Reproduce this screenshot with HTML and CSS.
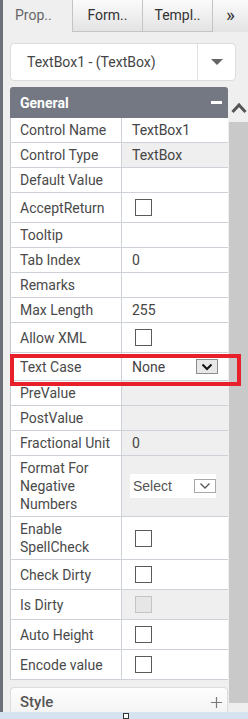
FILE: index.html
```html
<!DOCTYPE html>
<html>
  <head>
    <title>Properties</title>
    <link rel="stylesheet" href="styles.css">
  </head>
  <body>
    <div class="frame">
      <div class="edge"></div>
      <div class="pane">
        <div class="tabs">
          <div class="tab active">Prop..</div>
          <div class="tab">Form..</div>
          <div class="tab">Templ..</div>
          <div class="tab more">&raquo;</div>
        </div>

        <div class="picker">
          <div class="picker-text">TextBox1 - (TextBox)</div>
          <div class="picker-btn"><span class="caret"></span></div>
        </div>

        <div class="body-row">
          <div class="panels">
            <div class="panel">
              <div class="panel-head">
                <span>General</span>
                <span class="minus"></span>
              </div>
              <table class="grid">
                <tr><td>Control Name</td><td>TextBox1</td></tr>
                <tr><td>Control Type</td><td class="ro">TextBox</td></tr>
                <tr><td>Default Value</td><td></td></tr>
                <tr class="chk"><td>AcceptReturn</td><td><span class="box"></span></td></tr>
                <tr><td>Tooltip</td><td></td></tr>
                <tr><td>Tab Index</td><td>0</td></tr>
                <tr><td>Remarks</td><td></td></tr>
                <tr><td>Max Length</td><td>255</td></tr>
                <tr class="chk"><td>Allow XML</td><td><span class="box"></span></td></tr>
                <tr class="case">
                  <td class="mark-cell">Text Case<div class="mark"></div></td>
                  <td>
                    <div class="sel">
                      <span>None</span>
                      <span class="sel-btn dark">
                        <svg width="12" height="8" viewBox="0 0 12 8"><path d="M1.5 1.5 L6 6 L10.5 1.5" fill="none" stroke="#111" stroke-width="2"/></svg>
                      </span>
                    </div>
                  </td>
                </tr>
                <tr><td>PreValue</td><td class="ro"></td></tr>
                <tr><td>PostValue</td><td class="ro"></td></tr>
                <tr><td>Fractional Unit</td><td class="ro">0</td></tr>
                <tr class="multi">
                  <td>Format For<br>Negative<br>Numbers</td>
                  <td class="ro">
                    <div class="select-box">
                      <span>Select</span>
                      <span class="sel-btn light">
                        <svg width="12" height="8" viewBox="0 0 12 8"><path d="M1.5 1.5 L6 6 L10.5 1.5" fill="none" stroke="#555" stroke-width="1.3"/></svg>
                      </span>
                    </div>
                  </td>
                </tr>
                <tr class="multi"><td>Enable<br>SpellCheck</td><td><span class="box"></span></td></tr>
                <tr class="chk"><td>Check Dirty</td><td><span class="box"></span></td></tr>
                <tr class="chk"><td>Is Dirty</td><td class="ro"><span class="box off"></span></td></tr>
                <tr class="chk"><td>Auto Height</td><td><span class="box"></span></td></tr>
                <tr class="chk last"><td>Encode value</td><td><span class="box"></span></td></tr>
              </table>
            </div>

            <div class="panel-closed">
              <span>Style</span>
              <svg class="plus" width="11" height="11" viewBox="0 0 11 11"><path d="M5.5 0 V11 M0 5.5 H11" stroke="#7a7a7a" stroke-width="1.2"/></svg>
            </div>
          </div>

          <div class="scroll">
            <div class="scroll-up">
              <svg width="16" height="12" viewBox="0 0 16 12"><path d="M1.5 10 L8 3 L14.5 10" fill="none" stroke="#555" stroke-width="3"/></svg>
            </div>
            <div class="thumb"></div>
          </div>
        </div>
      </div>
    </div>
    <div class="status"><span class="grip"></span></div>
  </body>
</html>
```

FILE: styles.css
```css
html, body {
  height: 100%;
}

body {
  margin: 0;
  font-family: Roboto, "Liberation Sans", sans-serif;
  font-size: 14px;
  color: #4a4a4a;
  background-color: #efefef;
  display: flex;
  flex-direction: column;
  overflow: hidden;
}

.frame {
  flex: 1;
  display: flex;
  min-height: 0;
}

.edge {
  width: 3px;
  background-color: #6b7079;
}

.pane {
  flex: 1;
  display: flex;
  flex-direction: column;
  min-width: 0;
}

/* tabs */
.tabs {
  display: flex;
  height: 32px;
}

.tab {
  width: 70px;
  box-sizing: border-box;
  display: flex;
  align-items: center;
  justify-content: center;
  color: #333;
  background: linear-gradient(#fbfbfb, #e3e3e3);
  border-left: 1px solid #c4c4c4;
  border-bottom: 1px solid #c4c4c4;
  padding-bottom: 2px;
}

.tab.active {
  width: 69px;
  background: #efefef;
  color: #666;
  border: none;
  justify-content: flex-start;
  padding-left: 12px;
}

.tab.more {
  flex: 1;
  border-bottom: none;
  font-size: 19px;
  padding-bottom: 4px;
}

/* component picker */
.picker {
  margin: 11px 12px 0 7px;
  height: 38px;
  box-sizing: border-box;
  display: flex;
  background-color: #fff;
  border: 1px solid #dcdcdc;
  border-radius: 4px;
}

.picker-text {
  flex: 1;
  padding-left: 16px;
  line-height: 36px;
  color: #444;
}

.picker-btn {
  width: 37px;
  border-left: 1px solid #e2e2e2;
  display: flex;
  align-items: center;
  justify-content: center;
}

.caret {
  width: 0;
  height: 0;
  border-left: 6px solid transparent;
  border-right: 6px solid transparent;
  border-top: 6px solid #666;
}

/* panels + scrollbar */
.body-row {
  flex: 1;
  display: flex;
  min-height: 0;
  margin-top: 6px;
  overflow: hidden;
}

.panels {
  width: 218px;
  margin-left: 7px;
}

.panel-head {
  height: 31px;
  background-color: #737882;
  border-radius: 3px 3px 0 0;
  color: #fff;
  font-weight: bold;
  display: flex;
  align-items: center;
  justify-content: space-between;
  padding: 0 6px 0 10px;
}

.minus {
  width: 11px;
  height: 3px;
  background-color: #fff;
}

.grid {
  width: 100%;
  border-collapse: collapse;
  background-color: #fff;
  table-layout: fixed;
}

.grid td {
  border: 1px solid #cdd1d8;
  padding: 3px 9px;
  line-height: 18px;
  vertical-align: middle;
}

.grid td:first-child {
  width: 92px;
  border-left-color: #c5cad2;
}

.grid td:last-child {
  border-right: none;
  padding-left: 10px;
  color: #444;
}

.grid tr:first-child td {
  border-top: none;
}

.grid td.ro {
  background-color: #efefef;
}

.grid tr.chk td {
  height: 23px;
}

.grid tr.case td {
  height: 21px;
}

.grid tr.last td:first-child {
  border-bottom-left-radius: 4px;
}

.box {
  display: block;
  width: 15px;
  height: 15px;
  border: 1px solid #5a5a5a;
  background-color: #fff;
  margin-left: 3px;
}

.box.off {
  border-color: #c4c4c4;
  background-color: #e6e6e6;
}

.mark-cell {
  position: relative;
}

.mark {
  position: absolute;
  left: -1px;
  top: 1px;
  width: 223px;
  height: 24px;
  border: 4px solid #e8202a;
}

.sel {
  display: flex;
  align-items: center;
  justify-content: space-between;
  padding-right: 1px;
}

.sel-btn {
  width: 22px;
  height: 15px;
  box-sizing: border-box;
  display: flex;
  align-items: center;
  justify-content: center;
}

.sel-btn.dark {
  background-color: #e8e8e8;
  border: 1px solid #8d8d8d;
}

.sel-btn.light {
  background-color: #fff;
  border: 1px solid #a8a8a8;
  height: 14px;
}

.select-box {
  background-color: #fff;
  height: 24px;
  margin-left: -2px;
  margin-right: 3px;
  padding-left: 3px;
  display: flex;
  align-items: center;
  justify-content: space-between;
  font-family: "Liberation Sans", Arial, sans-serif;
  color: #555;
}

.panel-closed {
  margin-top: 7px;
  height: 40px;
  box-sizing: border-box;
  border: 1px solid #dcdcdc;
  border-radius: 4px 4px 0 0;
  background: linear-gradient(#fdfdfd, #efefef);
  display: flex;
  justify-content: space-between;
  padding: 5px 5px 0 9px;
  font-size: 15px;
  font-weight: 500;
  color: #555;
}

.plus {
  margin-top: 4px;
}

.scroll {
  width: 19px;
  margin-left: 1px;
  display: flex;
  flex-direction: column;
  padding-bottom: 9px;
}

.scroll-up {
  height: 35px;
  display: flex;
  align-items: flex-end;
  justify-content: center;
  box-sizing: border-box;
}

.scroll-up svg {
  margin-bottom: 8px;
}

.thumb {
  flex: 1;
  background-color: #c9c9c9;
}

.status {
  height: 7px;
  background-color: #d6e3f0;
  position: relative;
}

.grip {
  position: absolute;
  left: 123px;
  top: 1px;
  width: 4px;
  height: 4px;
  border: 1px solid #333;
  background-color: #fff;
}
```
